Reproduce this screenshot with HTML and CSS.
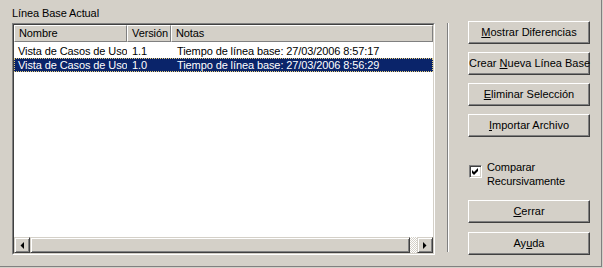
FILE: index.html
```html
<!DOCTYPE html>
<html lang="es">
<head>
  <meta charset="UTF-8">
  <title>Línea Base</title>
  <link rel="stylesheet" href="styles.css">
</head>
<body>
  <div class="dialog">

    <!-- Lista de líneas base -->
    <div class="baseline-panel">
      <div class="panel-title">Línea Base Actual</div>
      <div class="listview">
        <div class="listview__inner">
          <div class="lv-header">
            <div class="lv-col col-name">Nombre</div>
            <div class="lv-col col-ver">Versión</div>
            <div class="lv-col col-notes">Notas</div>
          </div>
          <div class="lv-body">
            <div class="lv-row">
              <span class="col-name">Vista de Casos de Uso</span>
              <span class="col-ver">1.1</span>
              <span class="col-notes">Tiempo de línea base: 27/03/2006 8:57:17</span>
            </div>
            <div class="lv-row selected">
              <span class="col-name">Vista de Casos de Uso</span>
              <span class="col-ver">1.0</span>
              <span class="col-notes">Tiempo de línea base: 27/03/2006 8:56:29</span>
            </div>
          </div>
          <div class="hscroll">
            <div class="sb-btn">
              <svg width="4" height="7" viewBox="0 0 4 7"><polygon points="4,0 4,7 0.5,3.5" fill="#000"/></svg>
            </div>
            <div class="sb-thumb"></div>
            <div class="sb-track"></div>
            <div class="sb-btn">
              <svg width="4" height="7" viewBox="0 0 4 7"><polygon points="0,0 0,7 3.5,3.5" fill="#000"/></svg>
            </div>
          </div>
        </div>
      </div>
    </div>

    <div class="separator"></div>

    <!-- Acciones -->
    <div class="actions">
      <button class="btn"><u>M</u>ostrar Diferencias</button>
      <button class="btn">Crear <u>N</u>ueva Línea Base</button>
      <button class="btn"><u>E</u>liminar Selección</button>
      <button class="btn"><u>I</u>mportar Archivo</button>

      <label class="check">
        <span class="check__box">
          <svg width="9" height="9" viewBox="0 0 9 9"><polygon points="1,3 3,5 7,1 7,4 3,8 1,6" fill="#000"/></svg>
        </span>
        <span class="check__text">Comparar<br>Recursivamente</span>
      </label>

      <button class="btn btn--close"><u>C</u>errar</button>
      <button class="btn">Ay<u>u</u>da</button>
    </div>

  </div>
</body>
</html>
```

FILE: styles.css
```css
:root{
  --face:#d4d0c8;
  --shadow:#808080;
  --dark:#404040;
  --hilite:#fff;
  --select:#0a246a;
}
*{margin:0;padding:0;box-sizing:border-box;}
body{background:var(--face);font-family:'Liberation Sans',Arial,sans-serif;font-size:11px;color:#000;letter-spacing:-0.1px;}

.dialog{display:flex;width:602px;height:267px;padding-left:12px;
        border-right:1px solid var(--shadow);border-bottom:1px solid var(--shadow);}

/* List panel */
.baseline-panel{display:flex;flex-direction:column;width:423px;}
.panel-title{height:23px;padding-top:6px;line-height:14px;}
.listview{height:232px;border:1px solid;border-color:var(--shadow) var(--hilite) var(--hilite) var(--shadow);}
.listview__inner{height:100%;display:flex;flex-direction:column;background:#fff;
                 border:1px solid;border-color:var(--dark) var(--face) var(--face) var(--dark);}

.lv-header{display:flex;height:17px;background:var(--face);}
.lv-col{line-height:15px;padding-left:4px;white-space:nowrap;
        border:1px solid;border-color:var(--hilite) var(--shadow) var(--shadow) var(--hilite);}
.lv-header .col-name{width:113px;}
.lv-header .col-ver{width:44px;}
.lv-header .col-notes{flex:1;}

.lv-body{flex:1;padding-top:2px;}
.lv-row{display:flex;height:14px;line-height:14px;white-space:nowrap;}
.lv-row span{padding-left:4px;overflow:hidden;}
.lv-row .col-name{width:113px;}
.lv-row .col-ver{width:44px;padding-left:5px;}
.lv-row .col-notes{flex:1;padding-left:6px;}
.lv-row.selected{background:var(--select);color:#fff;outline:1px dotted #e6cf7a;outline-offset:-1px;}

/* Horizontal scrollbar */
.hscroll{display:flex;height:16px;}
.sb-btn,.sb-thumb{border:1px solid;border-color:var(--face) var(--dark) var(--dark) var(--face);
                  box-shadow:inset 1px 1px var(--hilite),inset -1px -1px var(--shadow);background:var(--face);}
.sb-btn{width:16px;display:flex;align-items:center;justify-content:center;}
.sb-thumb{flex:1;}
.sb-track{width:7px;background:repeating-conic-gradient(var(--face) 0 25%,#fff 0 50%) 0 0/2px 2px;}

.separator{width:2px;height:229px;margin:23px 0 0 12px;
           border-left:1px solid var(--shadow);border-right:1px solid var(--hilite);}

/* Buttons */
.actions{display:flex;flex-direction:column;width:122px;margin-left:19px;padding-top:21px;}
.btn{height:23px;margin-bottom:8px;padding:0;font:inherit;color:#000;background:var(--face);line-height:21px;
     white-space:nowrap;border:1px solid;border-color:var(--hilite) var(--dark) var(--dark) var(--hilite);
     box-shadow:inset -1px -1px var(--shadow);}
.btn u{text-underline-offset:1px;}
.btn--close{margin-top:12px;margin-bottom:9px;}

.check{display:flex;align-items:flex-start;margin-top:15px;padding-left:1px;line-height:14px;}
.check__box{width:13px;height:13px;margin-top:5px;margin-right:5px;background:#fff;
            display:flex;align-items:center;justify-content:center;
            border:1px solid;border-color:var(--shadow) var(--hilite) var(--hilite) var(--shadow);
            box-shadow:inset 1px 1px var(--dark),inset -1px -1px var(--face);}
```
